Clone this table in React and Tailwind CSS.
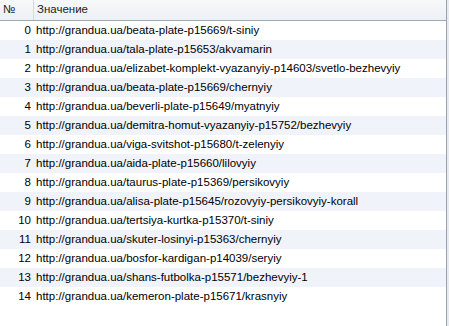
const urls = [
  "http://grandua.ua/beata-plate-p15669/t-siniy",
  "http://grandua.ua/tala-plate-p15653/akvamarin",
  "http://grandua.ua/elizabet-komplekt-vyazanyiy-p14603/svetlo-bezhevyiy",
  "http://grandua.ua/beata-plate-p15669/chernyiy",
  "http://grandua.ua/beverli-plate-p15649/myatnyiy",
  "http://grandua.ua/demitra-homut-vyazanyiy-p15752/bezhevyiy",
  "http://grandua.ua/viga-svitshot-p15680/t-zelenyiy",
  "http://grandua.ua/aida-plate-p15660/lilovyiy",
  "http://grandua.ua/taurus-plate-p15369/persikovyiy",
  "http://grandua.ua/alisa-plate-p15645/rozovyiy-persikovyiy-korall",
  "http://grandua.ua/tertsiya-kurtka-p15370/t-siniy",
  "http://grandua.ua/skuter-losinyi-p15363/chernyiy",
  "http://grandua.ua/bosfor-kardigan-p14039/seryiy",
  "http://grandua.ua/shans-futbolka-p15571/bezhevyiy-1",
  "http://grandua.ua/kemeron-plate-p15671/krasnyiy",
];

export default function App() {
  return (
    <div
      className="flex h-[326px] w-[449px] overflow-hidden bg-white text-[11.5px] text-black"
      style={{ fontFamily: '"Liberation Sans", Arial, sans-serif' }}
    >
      <div className="flex w-[446px] flex-col">
        <div className="flex h-[21px] border-b border-[#a0a8b4] bg-gradient-to-b from-[#f7f8fa] to-[#edf0f4] text-[#222]">
          <div className="flex w-[34px] items-center border-r border-[#d5d9e0] pl-[3px]">№</div>
          <div className="flex flex-1 items-center pl-[3px]">Значение</div>
        </div>
        {urls.map((u, i) => (
          <div
            key={i}
            className={`flex h-[19px] items-center ${i % 2 ? "bg-[#f0f3f9]" : "bg-white"}`}
          >
            <div className="w-[32px] pr-[1px] text-right">{i}</div>
            <div className="pl-[4px] whitespace-nowrap">{u}</div>
          </div>
        ))}
      </div>
      <div className="w-px bg-[#9aa2b0]" />
      <div className="flex-1 bg-[#e8eaf2]" />
    </div>
  );
}
